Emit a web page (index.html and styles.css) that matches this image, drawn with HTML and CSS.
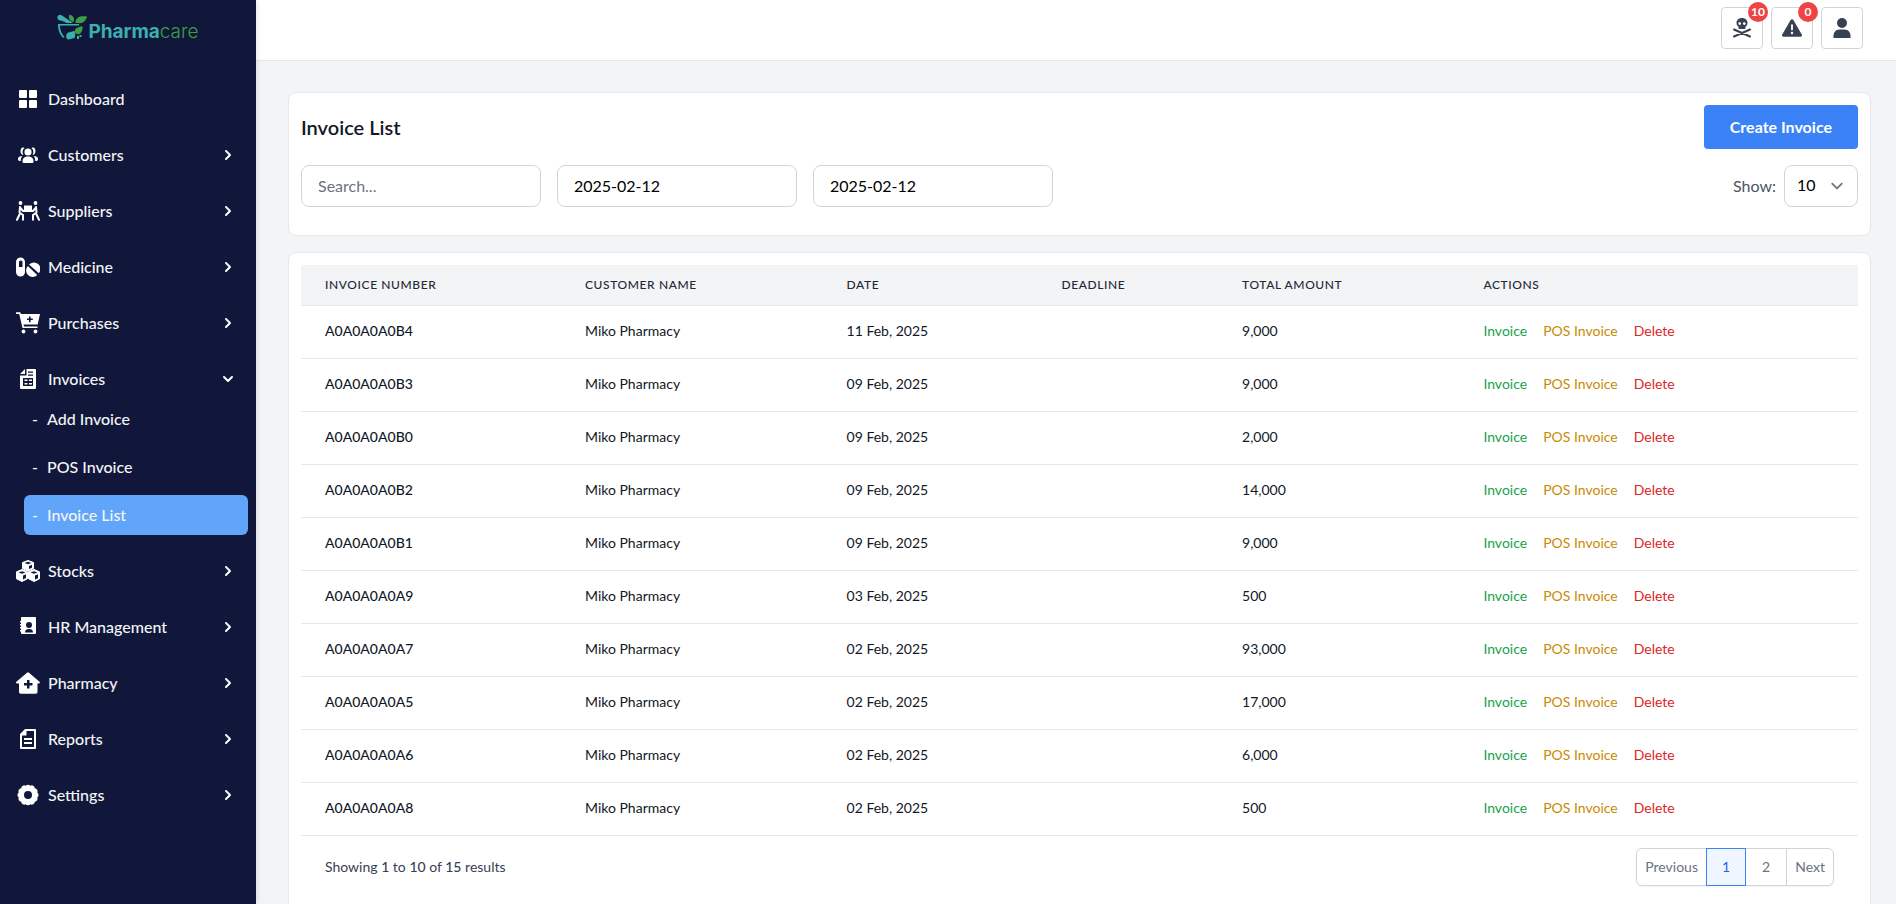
FILE: index.html
```
<!DOCTYPE html>
<html lang="en">
<head>
    <meta charset="UTF-8">
    <meta name="viewport" content="width=device-width, initial-scale=1.0">
    <title>Invoice List - Pharmacare</title>
    <link rel="stylesheet" href="styles.css">
</head>
<body>
    <svg class="sprite" aria-hidden="true">
        <symbol id="chevron" viewBox="0 0 16 16">
            <path d="M6 4l4 4-4 4" fill="none" stroke="currentColor" stroke-width="2" stroke-linecap="round" stroke-linejoin="round"/>
        </symbol>
    </svg>

    <div class="layout">
        <aside class="sidebar">
            <a class="logo" href="#">
                <svg class="logo-mark" viewBox="0 0 30 26" aria-hidden="true">
                    <path fill="#3cb0ad" d="M.5 3.500C0 1.500 3 -.5 5 1.500L16 9H10L4 6.500C2 6.800 .5 5.500 .5 3.500zM1 10H22V11.500H2.800C3 16 4.500 20 7.500 23L6.500 24C2.500 20.500 1 16 1 10zM11.500 18.500l5.500-1.500c1.500 0 1.500 6 .5 7l-6 1.500c-3 0-3.200-6 0-7z"/>
                    <path fill="#3a9f45" d="M12.500 0.500c4 1.500 5.500 4 4 7.500-4-1-5.500-4-4-7.500zM18.500 9c0-6 5-7.500 11.500-6.500-1 5-5.500 7.500-8.500 6.500zM19.500 14l5.500-2c1.500 3 0 7-3.500 8.500l-3.500-1.500c-1-2 0-4 1.500-5z"/>
                    <path fill="#3cb0ad" d="M20 22h2v3h-2zM22.500 21h2v2h-2z"/>
                </svg>
                <span class="logo-text"><b>Pharma</b>care</span>
            </a>

            <nav class="menu">
                <a class="menu-item" href="#">
                    <svg class="menu-icon" viewBox="0 0 24 24"><path d="M4 3H10a1 1 0 0 1 1 1v6a1 1 0 0 1-1 1H4a1 1 0 0 1-1-1V4a1 1 0 0 1 1-1zM14 3h6a1 1 0 0 1 1 1v6a1 1 0 0 1-1 1h-6a1 1 0 0 1-1-1V4a1 1 0 0 1 1-1zM4 13h6a1 1 0 0 1 1 1v6a1 1 0 0 1-1 1H4a1 1 0 0 1-1-1v-6a1 1 0 0 1 1-1zM14 13h6a1 1 0 0 1 1 1v6a1 1 0 0 1-1 1h-6a1 1 0 0 1-1-1v-6a1 1 0 0 1 1-1z"/></svg>
                    <span>Dashboard</span>
                </a>
                <a class="menu-item" href="#">
                    <svg class="menu-icon" viewBox="0 0 24 24"><circle cx="12" cy="9" r="3.600"/><path d="M6.500 18.500c0-3.200 2-5 5.500-5s5.500 1.800 5.500 5c0 1-.6 1.500-1.500 1.500H8c-.9 0-1.500-.5-1.500-1.500z"/><path d="M8.500 5.200C6.500 6 6 10 7.500 12 4 12 3.500 5.500 6.500 4.500c1-.3 2 0 2 .7zM15.500 5.200c2 .8 2.500 4.800 1 6.800 3.500 0 4-6.500 1-7.500-1-.3-2 0-2 .7zM6.500 13.500C5 14.500 4.800 16 4.700 18 2.500 18 2 17.500 2 16c0-1.800 1.800-3.500 4.500-2.500zM17.500 13.500c1.500 1 1.700 2.500 1.800 4.500 2.200 0 2.700-.5 2.700-2 0-1.800-1.800-3.500-4.500-2.500z"/></svg>
                    <span>Customers</span>
                    <svg class="menu-arrow"><use href="#chevron"/></svg>
                </a>
                <a class="menu-item" href="#">
                    <svg class="menu-icon" viewBox="0 0 24 24"><circle cx="4.500" cy="4" r="1.900"/><circle cx="19.500" cy="4" r="1.900"/><path d="M8 6.500h8v6.500H8z"/><path d="M4 8l-.5 5.500L7 16v4.800M3.500 15.500L1 20.800M20 8l.5 5.500L17 16v4.800M20.500 15.500L23 20.800" fill="none" stroke="#fff" stroke-width="2" stroke-linecap="round" stroke-linejoin="round"/><path d="M4 8.500l3 3.500h10l3-3.500" fill="none" stroke="#fff" stroke-width="2"/></svg>
                    <span>Suppliers</span>
                    <svg class="menu-arrow"><use href="#chevron"/></svg>
                </a>
                <a class="menu-item" href="#">
                    <svg class="menu-icon" viewBox="0 0 24 24"><path fill-rule="evenodd" d="M4.500 2.500A4.500 4.500 0 0 1 9 7v10a4.500 4.500 0 0 1-9 0V7a4.500 4.500 0 0 1 4.500-4.500zM3 7v5h3.500V7a1.800 1.800 0 0 0-3.500 0z"/><path d="M13 9.600a6.500 6.500 0 0 1 9.800 8.600zM11.900 10.900a6.500 6.500 0 0 0 9.300 9.100z"/></svg>
                    <span>Medicine</span>
                    <svg class="menu-arrow"><use href="#chevron"/></svg>
                </a>
                <a class="menu-item" href="#">
                    <svg class="menu-icon" viewBox="0 0 24 24"><path fill-rule="evenodd" d="M0 1.200h4.200L5 3h19l-2.300 10.500H7.500l.5 2h13.500V17H6.500L3.200 3H0zM13 5.500v2h-2V9h2v2.200h1.600V9h2.200V7.500h-2.200v-2z"/><circle cx="7.500" cy="20.500" r="1.900"/><circle cx="19.500" cy="20.500" r="1.900"/></svg>
                    <span>Purchases</span>
                    <svg class="menu-arrow"><use href="#chevron"/></svg>
                </a>
                <a class="menu-item" href="#">
                    <svg class="menu-icon" viewBox="0 0 24 24"><path fill-rule="evenodd" d="M10.500 2H19a1 1 0 0 1 1 1v18a1 1 0 0 1-1 1H5a1 1 0 0 1-1-1V8.500h6.500zM9 2v5H4zM12 4.500v1.200h5V4.500zM12 7.500v1.200h5V7.500zM7 11v8h10v-8zM8.500 12.500h3V14h-3zM13 12.500h3V14h-3zM8.500 16h3v1.500h-3zM13 16h3v1.500h-3z"/></svg>
                    <span>Invoices</span>
                    <svg class="menu-arrow open"><use href="#chevron"/></svg>
                </a>
                <div class="submenu">
                    <a class="submenu-item" href="#"><span>-</span>Add Invoice</a>
                    <a class="submenu-item" href="#"><span>-</span>POS Invoice</a>
                    <a class="submenu-item active" href="#"><span>-</span>Invoice List</a>
                </div>
                <a class="menu-item" href="#">
                    <svg class="menu-icon" viewBox="0 0 24 24"><path d="M12 1.500l5.500 2v6L12 12 6.500 9.500v-6zM6 10.500l5.500 2.200v7L6 22.500l-5.500-2.700v-7zM18 10.500l5.500 2.300v7L18 22.500l-5.500-2.800v-7z" stroke="#fff" stroke-linejoin="round"/><path d="M8.500 4L12 5.200 15.500 4 12 2.800zM13 7v3l3-1.300V5.800zM2.500 13.500L6 14.800l3.500-1.300L6 12.200zM7 16.500v4l3-1.500v-3.700zM14.500 13.500l3.500 1.300 3.500-1.300-3.500-1.300zM19 16.500v4l3-1.300v-4z" fill="#11173a"/></svg>
                    <span>Stocks</span>
                    <svg class="menu-arrow"><use href="#chevron"/></svg>
                </a>
                <a class="menu-item" href="#">
                    <svg class="menu-icon" viewBox="0 0 24 24"><path fill-rule="evenodd" d="M6 2h13a1 1 0 0 1 1 1v15a1 1 0 0 1-1 1H6a1 1 0 0 1-1-1v-1.500H4V15h1v-1.500H4V12h1v-1.500H4V9h1V7.500H4V6h1V3a1 1 0 0 1 1-1zM13 7a3 3 0 1 0 0 6 3 3 0 0 0 0-6zM9 17.500h8c0-2.500-1.500-3.500-4-3.500s-4 1-4 3.500z"/></svg>
                    <span>HR Management</span>
                    <svg class="menu-arrow"><use href="#chevron"/></svg>
                </a>
                <a class="menu-item" href="#">
                    <svg class="menu-icon" viewBox="0 0 24 24"><path fill-rule="evenodd" d="M11 1.700a1.500 1.500 0 0 1 2 0l10.500 9c.8.800.4 1.800-.6 1.800H21.500V21a1.800 1.800 0 0 1-1.800 1.800H4.800A1.800 1.800 0 0 1 3 21v-8.500H1c-1 0-1.400-1-.6-1.800zM11 9v3H8v2.500h3v3h2.500v-3h3V12h-3V9z"/></svg>
                    <span>Pharmacy</span>
                    <svg class="menu-arrow"><use href="#chevron"/></svg>
                </a>
                <a class="menu-item" href="#">
                    <svg class="menu-icon" viewBox="0 0 24 24"><path fill-rule="evenodd" d="M9 2h10a1 1 0 0 1 1 1v18a1 1 0 0 1-1 1H5a1 1 0 0 1-1-1V7zM10.500 4v4.500H6V20h12V4zM8 11h8v2H8zM8 15h8v2H8z"/></svg>
                    <span>Reports</span>
                    <svg class="menu-arrow"><use href="#chevron"/></svg>
                </a>
                <a class="menu-item" href="#">
                    <svg class="menu-icon" viewBox="0 0 24 24"><path fill-rule="evenodd" d="M9.700 2.800a3 3 0 0 1 4.600 0 3 3 0 0 1 4.500 2.400 3 3 0 0 1 2.400 4.300 3 3 0 0 1 0 5 3 3 0 0 1-2.400 4.300 3 3 0 0 1-4.500 2.400 3 3 0 0 1-4.600 0 3 3 0 0 1-4.500-2.400 3 3 0 0 1-2.400-4.300 3 3 0 0 1 0-5 3 3 0 0 1 2.400-4.300 3 3 0 0 1 4.500-2.400zM12 8a4 4 0 1 0 0 8 4 4 0 0 0 0-8z"/></svg>
                    <span>Settings</span>
                    <svg class="menu-arrow"><use href="#chevron"/></svg>
                </a>
            </nav>
        </aside>

        <div class="page">
            <header class="topbar">
                <button class="icon-btn" type="button" aria-label="Expired medicine">
                    <svg viewBox="0 0 20 20"><path fill-rule="evenodd" d="M10 0c3.500 0 5.500 2.300 5.500 5 0 1.700-.8 3-2 3.800V10a1 1 0 0 1-1 1h-5a1 1 0 0 1-1-1V8.800C5.300 8 4.500 6.700 4.500 5c0-2.700 2-5 5.500-5zM7.700 4.200a1.400 1.400 0 1 0 0 2.800 1.400 1.400 0 0 0 0-2.800zM12.300 4.200a1.400 1.400 0 1 0 0 2.800 1.400 1.400 0 0 0 0-2.800z"/><path d="M2 11.500l16 7M18 11.500l-16 7" stroke="#374151" stroke-width="2" stroke-linecap="round"/></svg>
                    <span class="badge">10</span>
                </button>
                <button class="icon-btn" type="button" aria-label="Low stock">
                    <svg viewBox="0 0 512 512"><path d="M256 32c14.200 0 27.300 7.500 34.500 19.800l216 368c7.300 12.400 7.300 27.700 .2 40.100S486.300 480 472 480H40c-14.300 0-27.600-7.700-34.700-20.100s-7-27.800 .2-40.100l216-368C228.700 39.500 241.800 32 256 32zm0 128c-13.300 0-24 10.700-24 24V296c0 13.300 10.700 24 24 24s24-10.700 24-24V184c0-13.300-10.700-24-24-24zm32 224a32 32 0 1 0 -64 0 32 32 0 1 0 64 0z"/></svg>
                    <span class="badge">0</span>
                </button>
                <button class="icon-btn" type="button" aria-label="Account">
                    <svg viewBox="0 0 20 20"><circle cx="10" cy="5" r="5"/><path d="M1.500 20c-.5-5.500 2-8.500 6-8.500h5c4 0 6.500 3 6 8.500z"/></svg>
                </button>
            </header>

            <main class="content">
                <section class="card filters">
                    <div class="card-head">
                        <h1>Invoice List</h1>
                        <button class="btn-create" type="button">Create Invoice</button>
                    </div>
                    <div class="filter-row">
                        <input class="field" type="text" placeholder="Search..." aria-label="Search">
                        <input class="field" type="text" value="2025-02-12" aria-label="From date">
                        <input class="field" type="text" value="2025-02-12" aria-label="To date">
                        <div class="show">
                            <label for="per-page">Show:</label>
                            <select id="per-page" class="per-page">
                                <option>10</option>
                                <option>25</option>
                                <option>50</option>
                            </select>
                        </div>
                    </div>
                </section>

                <section class="card">
                    <table class="invoices">
                        <thead>
                            <tr>
                                <th class="col-number">Invoice Number</th>
                                <th class="col-customer">Customer Name</th>
                                <th class="col-date">Date</th>
                                <th class="col-deadline">Deadline</th>
                                <th class="col-total">Total Amount</th>
                                <th>Actions</th>
                            </tr>
                        </thead>
                        <tbody>
                            <tr>
                                <td class="number">A0A0A0A0B4</td>
                                <td>Miko Pharmacy</td>
                                <td>11 Feb, 2025</td>
                                <td></td>
                                <td>9,000</td>
                                <td><div class="actions"><a class="invoice" href="#">Invoice</a><a class="pos" href="#">POS Invoice</a><button class="delete" type="button">Delete</button></div></td>
                            </tr>
                            <tr>
                                <td class="number">A0A0A0A0B3</td>
                                <td>Miko Pharmacy</td>
                                <td>09 Feb, 2025</td>
                                <td></td>
                                <td>9,000</td>
                                <td><div class="actions"><a class="invoice" href="#">Invoice</a><a class="pos" href="#">POS Invoice</a><button class="delete" type="button">Delete</button></div></td>
                            </tr>
                            <tr>
                                <td class="number">A0A0A0A0B0</td>
                                <td>Miko Pharmacy</td>
                                <td>09 Feb, 2025</td>
                                <td></td>
                                <td>2,000</td>
                                <td><div class="actions"><a class="invoice" href="#">Invoice</a><a class="pos" href="#">POS Invoice</a><button class="delete" type="button">Delete</button></div></td>
                            </tr>
                            <tr>
                                <td class="number">A0A0A0A0B2</td>
                                <td>Miko Pharmacy</td>
                                <td>09 Feb, 2025</td>
                                <td></td>
                                <td>14,000</td>
                                <td><div class="actions"><a class="invoice" href="#">Invoice</a><a class="pos" href="#">POS Invoice</a><button class="delete" type="button">Delete</button></div></td>
                            </tr>
                            <tr>
                                <td class="number">A0A0A0A0B1</td>
                                <td>Miko Pharmacy</td>
                                <td>09 Feb, 2025</td>
                                <td></td>
                                <td>9,000</td>
                                <td><div class="actions"><a class="invoice" href="#">Invoice</a><a class="pos" href="#">POS Invoice</a><button class="delete" type="button">Delete</button></div></td>
                            </tr>
                            <tr>
                                <td class="number">A0A0A0A0A9</td>
                                <td>Miko Pharmacy</td>
                                <td>03 Feb, 2025</td>
                                <td></td>
                                <td>500</td>
                                <td><div class="actions"><a class="invoice" href="#">Invoice</a><a class="pos" href="#">POS Invoice</a><button class="delete" type="button">Delete</button></div></td>
                            </tr>
                            <tr>
                                <td class="number">A0A0A0A0A7</td>
                                <td>Miko Pharmacy</td>
                                <td>02 Feb, 2025</td>
                                <td></td>
                                <td>93,000</td>
                                <td><div class="actions"><a class="invoice" href="#">Invoice</a><a class="pos" href="#">POS Invoice</a><button class="delete" type="button">Delete</button></div></td>
                            </tr>
                            <tr>
                                <td class="number">A0A0A0A0A5</td>
                                <td>Miko Pharmacy</td>
                                <td>02 Feb, 2025</td>
                                <td></td>
                                <td>17,000</td>
                                <td><div class="actions"><a class="invoice" href="#">Invoice</a><a class="pos" href="#">POS Invoice</a><button class="delete" type="button">Delete</button></div></td>
                            </tr>
                            <tr>
                                <td class="number">A0A0A0A0A6</td>
                                <td>Miko Pharmacy</td>
                                <td>02 Feb, 2025</td>
                                <td></td>
                                <td>6,000</td>
                                <td><div class="actions"><a class="invoice" href="#">Invoice</a><a class="pos" href="#">POS Invoice</a><button class="delete" type="button">Delete</button></div></td>
                            </tr>
                            <tr>
                                <td class="number">A0A0A0A0A8</td>
                                <td>Miko Pharmacy</td>
                                <td>02 Feb, 2025</td>
                                <td></td>
                                <td>500</td>
                                <td><div class="actions"><a class="invoice" href="#">Invoice</a><a class="pos" href="#">POS Invoice</a><button class="delete" type="button">Delete</button></div></td>
                            </tr>
                        </tbody>
                    </table>

                    <div class="table-foot">
                        <p>Showing <b>1</b> to <b>10</b> of <b>15</b> results</p>
                        <nav class="pagination" aria-label="Pagination">
                            <a href="#">Previous</a>
                            <a class="page-number current" href="#">1</a>
                            <a class="page-number" href="#">2</a>
                            <a href="#">Next</a>
                        </nav>
                    </div>
                </section>
            </main>
        </div>
    </div>
</body>
</html>
```
FILE: styles.css
```
* {
    margin: 0;
    padding: 0;
    box-sizing: border-box;
}

body {
    font-family: Lato, "Open Sans", sans-serif;
    font-size: 16px;
    line-height: 24px;
    color: #111827;
    background-color: #f3f4f6;
}

a {
    color: inherit;
    text-decoration: none;
}

button, input, select {
    font: inherit;
}

button {
    cursor: pointer;
}

.sprite {
    display: none;
}

.layout {
    display: flex;
    height: 100vh;
}

/* sidebar */
.sidebar {
    width: 256px;
    flex-shrink: 0;
    background-color: #11173a;
    color: #f3f4f6;
    box-shadow: 0 0 6px rgba(0, 0, 0, 0.15);
    z-index: 1;
}

.logo {
    display: flex;
    justify-content: center;
    align-items: flex-start;
    gap: 1px;
    height: 79px;
    padding-top: 14px;
}

.logo-mark {
    width: 30px;
    height: 26px;
}

.logo-text {
    padding-top: 6px;
    font-family: Inter, sans-serif;
    font-size: 19px;
    line-height: 24px;
    font-weight: 300;
    color: #3a9f45;
}

.logo-text b {
    font-weight: 700;
    color: #3cb0ad;
}

.menu {
    display: flex;
    flex-direction: column;
}

.menu-item {
    display: flex;
    align-items: center;
    gap: 8px;
    height: 40px;
    padding: 0 20px 0 16px;
    margin-bottom: 16px;
    font-weight: 500;
}

.menu-item:has(+ .submenu) {
    margin-bottom: 0;
}

.menu-icon {
    width: 24px;
    height: 24px;
    fill: #ffffff;
}

.menu-arrow {
    width: 16px;
    height: 16px;
    margin-left: auto;
    color: #ffffff;
}

.menu-arrow.open {
    transform: rotate(90deg);
}

.submenu {
    display: flex;
    flex-direction: column;
    gap: 8px;
    padding: 0 8px 0 24px;
    margin-bottom: 16px;
}

.submenu-item {
    display: flex;
    align-items: center;
    gap: 9px;
    height: 40px;
    padding: 0 8px;
    border-radius: 6px;
    font-weight: 500;
}

.submenu-item.active {
    background-color: #60a5fa;
}

/* top bar */
.page {
    flex: 1;
    min-width: 0;
    display: flex;
    flex-direction: column;
}

.topbar {
    display: flex;
    justify-content: flex-end;
    gap: 8px;
    flex-shrink: 0;
    padding: 7px 33px 11px;
    background-color: #ffffff;
    border-bottom: 1px solid #e5e7eb;
}

.icon-btn {
    position: relative;
    display: flex;
    justify-content: center;
    align-items: center;
    width: 42px;
    height: 42px;
    border: 1px solid #d1d5db;
    border-radius: 4px;
    background-color: #ffffff;
}

.icon-btn svg {
    width: 20px;
    height: 20px;
    fill: #374151;
}

.badge {
    position: absolute;
    top: -6px;
    right: -6px;
    width: 20px;
    height: 20px;
    border-radius: 50%;
    background-color: #ef4444;
    color: #ffffff;
    font-size: 12px;
    line-height: 20px;
    font-weight: 700;
    text-align: center;
}

/* content */
.content {
    flex: 1;
    padding: 31px 25px 31px 32px;
    overflow-y: auto;
    scrollbar-width: none;
}

.card {
    padding: 12px;
    background-color: #ffffff;
    border: 1px solid #e5e7eb;
    border-radius: 8px;
}

.filters {
    padding-bottom: 28px;
    margin-bottom: 16px;
}

.card-head {
    display: flex;
    justify-content: space-between;
    align-items: center;
    margin-bottom: 16px;
}

.card-head h1 {
    font-size: 20px;
    font-weight: 600;
}

.btn-create {
    height: 44px;
    padding: 0 26px;
    border: none;
    border-radius: 4px;
    background-color: #3b82f6;
    color: #ffffff;
    font-weight: 700;
}

.filter-row {
    display: flex;
    gap: 16px;
}

.field {
    width: 240px;
    height: 42px;
    padding: 0 16px 2px;
    border: 1px solid #d1d5db;
    border-radius: 8px;
    color: #000000;
}

.field::placeholder {
    color: #6b7280;
}

.show {
    display: flex;
    align-items: center;
    gap: 8px;
    margin-left: auto;
    color: #4b5563;
}

.per-page {
    appearance: none;
    width: 74px;
    height: 42px;
    padding: 0 12px 2px;
    border: 1px solid #d1d5db;
    border-radius: 8px;
    color: #000000;
    background: #ffffff url("data:image/svg+xml,%3Csvg xmlns='http://www.w3.org/2000/svg' fill='none' viewBox='0 0 20 20'%3E%3Cpath stroke='%236b7280' stroke-linecap='round' stroke-linejoin='round' stroke-width='1.500' d='M6 8l4 4 4-4'/%3E%3C/svg%3E") no-repeat right 8px center / 24px 24px;
}

/* table */
.invoices {
    width: 100%;
    table-layout: fixed;
    border-collapse: collapse;
    font-size: 14px;
    line-height: 20px;
    text-align: left;
}

.invoices th {
    height: 40px;
    padding: 0 24px;
    background-color: #f3f4f6;
    border-bottom: 1px solid #e5e7eb;
    color: #1f2937;
    font-size: 12px;
    font-weight: 500;
    letter-spacing: 0.05em;
    text-transform: uppercase;
}

.invoices td {
    height: 53px;
    padding: 0 24px 2px;
    border-bottom: 1px solid #e5e7eb;
}

.col-number {
    width: 16.7%;
}

.col-customer {
    width: 16.8%;
}

.col-date {
    width: 13.8%;
}

.col-deadline {
    width: 11.6%;
}

.col-total {
    width: 15.5%;
}

.number {
    font-weight: 500;
}

.actions {
    display: flex;
    gap: 16px;
}

.invoice {
    color: #16a34a;
}

.pos {
    color: #ca8a04;
}

.delete {
    border: none;
    background: none;
    color: #dc2626;
}

.table-foot {
    display: flex;
    justify-content: space-between;
    align-items: center;
    padding: 12px 24px;
    font-size: 14px;
    line-height: 20px;
    color: #374151;
}

.table-foot b {
    font-weight: 500;
}

.pagination {
    display: flex;
    border: 1px solid #d1d5db;
    border-radius: 6px;
    color: #6b7280;
    box-shadow: 0 1px 2px rgba(0, 0, 0, 0.05);
}

.pagination a {
    padding: 8px;
}

.pagination a:last-child {
    border-left: 1px solid #d1d5db;
}

.pagination .page-number {
    padding: 8px 16px;
}

.pagination .current {
    margin: -1px 0;
    padding: 8px 15px;
    border: 1px solid #3b82f6;
    background-color: #eff6ff;
    color: #2563eb;
}
```
